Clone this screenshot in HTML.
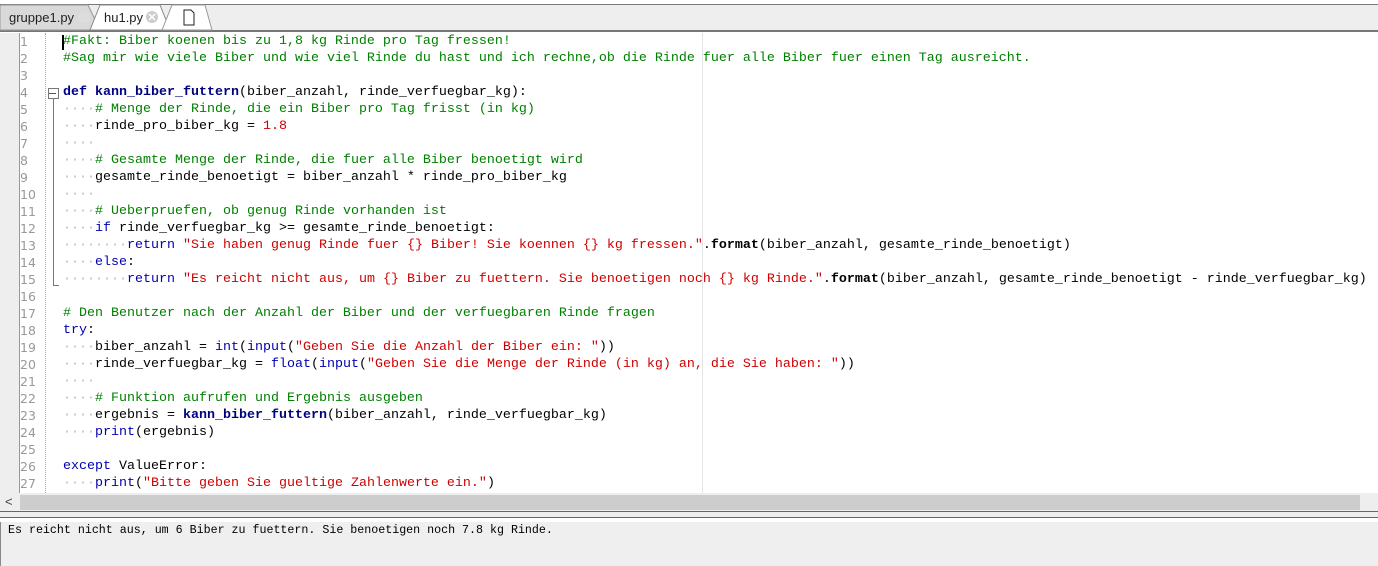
<!DOCTYPE html>
<html><head><meta charset="utf-8"><style>
body{margin:0;width:1378px;height:566px;background:#fff;position:relative;overflow:hidden;font-family:"Liberation Sans",sans-serif}
.tb{position:absolute;left:0;top:4px;width:1378px;height:26px;background:#eee;border-top:1px solid #777;}
.tbl{position:absolute;left:0;top:30px;width:1378px;height:2px;background:#777}
.tab{position:absolute;top:5px;height:25px;font-size:13px;line-height:25px;color:#222}
.ln{position:absolute;left:20px;width:25px;font-size:12.5px;color:#999;font-family:"DejaVu Sans","Liberation Sans",sans-serif}
.code{position:absolute;left:63px;font-family:"Liberation Mono",monospace;font-size:13.33px;white-space:pre;color:#000;line-height:17px}
.c{color:#008000}.k{color:#0000b0}.kb{color:#00008a;font-weight:bold}.f{color:#000080;font-weight:bold}.s{color:#d00000}.d{color:#bbb}.b{font-weight:bold}.n{color:#d00000}
</style></head><body>
<div class="tb"></div>
<div class="tbl"></div>
<svg style="position:absolute;left:0;top:4px" width="220" height="28">
<path d="M0 26 L0 2 Q0 1 2 1 L88 1 L100 26 Z" fill="#d9d9d9" stroke="#999"/>
<path d="M90 26 L100 1 L160 1 L170 26 Z" fill="#fff" stroke="#888"/>
<path d="M162 26 L172 1 L205 1 L212 26 Z" fill="#fff" stroke="#999"/>
<circle cx="84" cy="13" r="6" fill="#ddd"/><circle cx="152" cy="13" r="6" fill="#ccc"/>
<path d="M149 10l6 6M155 10l-6 6" stroke="#fff" stroke-width="1.5"/>
<path d="M184 6h7l3 3v12h-10z" fill="#fff" stroke="#222"/>
</svg>
<div class="tab" style="left:9px">gruppe1.py</div>
<div class="tab" style="left:104px">hu1.py</div>
<div style="position:absolute;left:0;top:33px;width:19px;height:460px;background:#eee;border-right:1px solid #999"></div>
<div style="position:absolute;left:45px;top:33px;height:460px;border-left:1px dotted #aaa"></div>
<div style="position:absolute;left:702px;top:33px;width:1px;height:460px;background:#e4e4e4"></div>
<div style="position:absolute;left:48px;top:88px;width:9px;height:9px;border:1px solid #777;background:#fff"></div>
<div style="position:absolute;left:49px;top:93px;width:7px;height:1px;background:#555"></div>
<div style="position:absolute;left:53px;top:99px;width:1px;height:187px;background:#777"></div>
<div style="position:absolute;left:53px;top:285px;width:6px;height:1px;background:#777"></div>
<div style="position:absolute;left:62px;top:35px;width:2px;height:15px;background:#000"></div>
<div class="ln" style="top:33px;line-height:17px">1<br>2<br>3<br>4<br>5<br>6<br>7<br>8<br>9<br>10<br>11<br>12<br>13<br>14<br>15<br>16<br>17<br>18<br>19<br>20<br>21<br>22<br>23<br>24<br>25<br>26<br>27</div>
<div class="code" style="top:33px"><span class="c">#Fakt: Biber koenen bis zu 1,8 kg Rinde pro Tag fressen!</span>
<span class="c">#Sag mir wie viele Biber und wie viel Rinde du hast und ich rechne,ob die Rinde fuer alle Biber fuer einen Tag ausreicht.</span>

<span class="kb">def</span> <span class="f">kann_biber_futtern</span>(biber_anzahl, rinde_verfuegbar_kg):
<span class="d">····</span><span class="c"># Menge der Rinde, die ein Biber pro Tag frisst (in kg)</span>
<span class="d">····</span>rinde_pro_biber_kg = <span class="n">1.8</span>
<span class="d">····</span>
<span class="d">····</span><span class="c"># Gesamte Menge der Rinde, die fuer alle Biber benoetigt wird</span>
<span class="d">····</span>gesamte_rinde_benoetigt = biber_anzahl * rinde_pro_biber_kg
<span class="d">····</span>
<span class="d">····</span><span class="c"># Ueberpruefen, ob genug Rinde vorhanden ist</span>
<span class="d">····</span><span class="k">if</span> rinde_verfuegbar_kg &gt;= gesamte_rinde_benoetigt:
<span class="d">········</span><span class="k">return</span> <span class="s">"Sie haben genug Rinde fuer {} Biber! Sie koennen {} kg fressen."</span>.<span class="b">format</span>(biber_anzahl, gesamte_rinde_benoetigt)
<span class="d">····</span><span class="k">else</span>:
<span class="d">········</span><span class="k">return</span> <span class="s">"Es reicht nicht aus, um {} Biber zu fuettern. Sie benoetigen noch {} kg Rinde."</span>.<span class="b">format</span>(biber_anzahl, gesamte_rinde_benoetigt - rinde_verfuegbar_kg)

<span class="c"># Den Benutzer nach der Anzahl der Biber und der verfuegbaren Rinde fragen</span>
<span class="k">try</span>:
<span class="d">····</span>biber_anzahl = <span class="k">int</span>(<span class="k">input</span>(<span class="s">"Geben Sie die Anzahl der Biber ein: "</span>))
<span class="d">····</span>rinde_verfuegbar_kg = <span class="k">float</span>(<span class="k">input</span>(<span class="s">"Geben Sie die Menge der Rinde (in kg) an, die Sie haben: "</span>))
<span class="d">····</span>
<span class="d">····</span><span class="c"># Funktion aufrufen und Ergebnis ausgeben</span>
<span class="d">····</span>ergebnis = <span class="f">kann_biber_futtern</span>(biber_anzahl, rinde_verfuegbar_kg)
<span class="d">····</span><span class="k">print</span>(ergebnis)

<span class="k">except</span> ValueError:
<span class="d">····</span><span class="k">print</span>(<span class="s">"Bitte geben Sie gueltige Zahlenwerte ein."</span>)</div>
<div style="position:absolute;left:0;top:493px;width:1378px;height:18px;background:#eee"></div>
<div style="position:absolute;left:20px;top:495px;width:1340px;height:15px;background:#cdcdcd"></div>
<div style="position:absolute;left:5px;top:494px;font-size:13px;color:#444">&lt;</div>
<div style="position:absolute;left:0;top:511px;width:1378px;height:1px;background:#666"></div>
<div style="position:absolute;left:0;top:512px;width:1378px;height:5px;background:#eee"></div>
<div style="position:absolute;left:0;top:517px;width:1378px;height:1px;background:#666"></div>
<div style="position:absolute;left:0;top:522px;width:1378px;height:44px;background:#efefef;border-left:1px solid #888"></div>
<div style="position:absolute;left:8px;top:523px;font-family:'Liberation Mono',monospace;font-size:11.65px;line-height:15px;white-space:pre">Es reicht nicht aus, um 6 Biber zu fuettern. Sie benoetigen noch 7.8 kg Rinde.</div>
</body></html>
